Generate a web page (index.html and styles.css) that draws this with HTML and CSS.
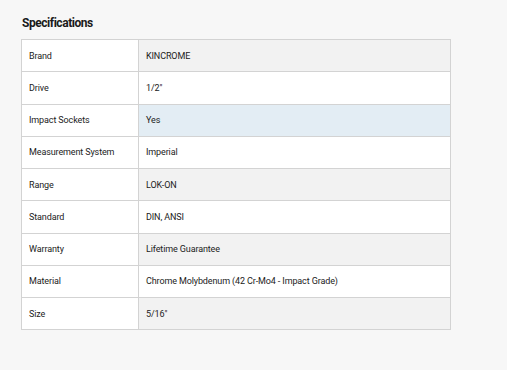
FILE: index.html
```
<!DOCTYPE html>
<html lang="en">
<head>
    <meta charset="UTF-8">
    <meta name="viewport" content="width=device-width, initial-scale=1.0">
    <title>Specifications</title>
    <link rel="stylesheet" href="styles.css">
</head>
<body>
    <div class="specs">
        <h2>Specifications</h2>
        <table class="spec-table">
            <tr><th>Brand</th><td>KINCROME</td></tr>
            <tr><th>Drive</th><td>1/2"</td></tr>
            <tr class="active"><th>Impact Sockets</th><td>Yes</td></tr>
            <tr><th>Measurement System</th><td>Imperial</td></tr>
            <tr><th>Range</th><td>LOK-ON</td></tr>
            <tr><th>Standard</th><td>DIN, ANSI</td></tr>
            <tr><th>Warranty</th><td>Lifetime Guarantee</td></tr>
            <tr><th>Material</th><td>Chrome Molybdenum (42 Cr-Mo4 - Impact Grade)</td></tr>
            <tr><th>Size</th><td>5/16"</td></tr>
        </table>
    </div>
</body>
</html>
```

FILE: styles.css
```
body {
    margin: 0;
    background: #f7f7f7;
    font-family: Roboto, Arial, sans-serif;
    color: #222;
}
.specs {
    padding: 15px 21px;
}
.specs h2 {
    margin: 0 0 8px 1px;
    font-size: 12px;
    line-height: 16px;
    font-weight: 700;
    letter-spacing: -0.45px;
    color: #1a1a1a;
}
.spec-table {
    width: 430px;
    border-collapse: collapse;
    background: #fff;
    font-size: 9px;
    letter-spacing: -0.12px;
}
.spec-table th,
.spec-table td {
    height: 31.25px;
    padding: 0 7px;
    border: 1px solid #d3d3d3;
    text-align: left;
    font-weight: 400;
}
.spec-table th {
    width: 102px;
}
.spec-table tr:nth-child(odd) td {
    background: #f2f2f2;
}
.spec-table tr.active td {
    background: #e3edf4;
}
```
